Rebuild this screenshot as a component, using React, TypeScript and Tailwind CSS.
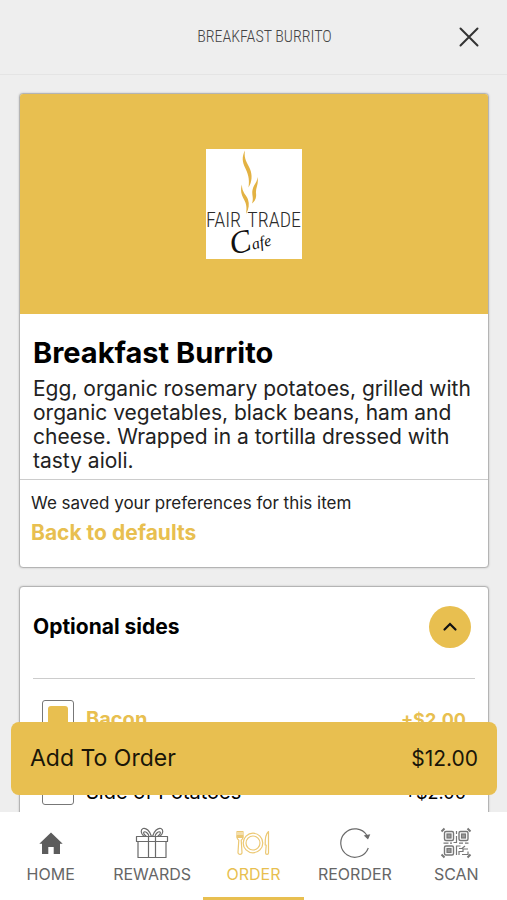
import { useState, type ReactNode } from "react";

function Logo() {
  return (
    <svg viewBox="0 0 96 110" className="h-[110px] w-24 bg-white" role="img" aria-label="Fair Trade Cafe">
      <g fill="#e3b243">
        <path d="M39 1.500C35.500 8 36.500 13 39 18.500C41.500 24 44 29 42.500 38.500C46 33 46.500 26 44 20C41.500 14 37.500 10 39 1.500z" />
        <path d="M51.500 28C51.500 33 47.500 36 46.500 41C45.500 46 48 49 46 54.500C50 51 50.500 48 50 44C49.500 39 53 35 51.500 28z" />
        <path d="M36 35.500C34 41 35.500 46 38 50.500C40.500 55 41 59 40 65C43 60 43.500 55 42 50.500C40.500 46 35.500 43 36 35.500z" />
      </g>
      <g fill="#2b2b2b" fontFamily="'Roboto Condensed', Lato, sans-serif" fontSize="20" fontWeight="300">
        <text x="0" y="78">FAIR</text>
        <text x="95" y="78" textAnchor="end">TRADE</text>
      </g>
      <g transform="rotate(-14 30 104)" fill="#111" fontFamily="'Liberation Serif', serif" fontStyle="italic">
        <text x="26" y="105" fontSize="32">
          C<tspan fontSize="16">afe</tspan>
        </text>
      </g>
    </svg>
  );
}

function CloseIcon() {
  return (
    <svg viewBox="0 0 20 20" className="size-5" fill="none" stroke="#333" strokeWidth="2" strokeLinecap="round">
      <path d="M1.500 1.500l17 17M18.500 1.500l-17 17" />
    </svg>
  );
}

function HomeIcon() {
  return (
    <svg viewBox="0 0 32 32" className="size-8" fill="#5c5c5c">
      <path d="M16 5.500 4.300 16.800H7V27h6.300v-7h5.400v7H25V16.800h2.700z" />
    </svg>
  );
}

function GiftIcon() {
  return (
    <svg viewBox="0 0 34 32" className="h-8 w-[34px]" fill="none" stroke="#6a6a6a" strokeWidth="1.200" strokeLinejoin="round">
      <path d="M1.500 9.500h31v5h-31zM3 14.500h28v16H3zM13.500 9.500v21M20.500 9.500v21" />
      <path d="M16.500 9.500C15 4 11 .5 8 1.500C5.500 2.500 5.500 6.500 9 9.500M14 9.500C13.500 6.500 10.500 4 9 5c-1.200 1 .5 3 2.500 4.500" />
      <path d="M17.500 9.500C19 4 23 .5 26 1.500C28.500 2.500 28.500 6.500 25 9.500M20 9.500C20.500 6.500 23.500 4 25 5c1.200 1-.5 3-2.500 4.500" />
    </svg>
  );
}

function PlateIcon() {
  return (
    <svg viewBox="0 0 34 32" className="h-8 w-[34px]" fill="none" stroke="#ecc873" strokeWidth="1.200" strokeLinejoin="round">
      <circle cx="17" cy="16" r="9.800" />
      <circle cx="17" cy="16" r="7" />
      <path d="M1 4.500h6V10c0 2-1 2.800-1.800 3.300L6 25.500c0 2.400-4 2.400-4 0l.8-12.200C2 12.800 1 12 1 10zM3 4.500V9M5 4.500V9" />
      <path d="M1.200 8.500h5.600v2H1.200z" fill="#ecc873" />
      <path d="M32.500 4.500c-3 2.500-3.500 8-3.300 13.500h1L29.600 26c0 1.800 2.900 1.800 2.900 0z" />
    </svg>
  );
}

function ReorderIcon() {
  return (
    <svg viewBox="0 0 32 32" className="size-8" fill="none" stroke="#6a6a6a" strokeWidth="1.200">
      <path d="M29.300 21A14.200 14.200 0 1 1 28 8.500" />
      <path d="M26 8.800l4.300-.8-1.500 3.500z" fill="#6a6a6a" />
    </svg>
  );
}

function ScanIcon() {
  return (
    <svg viewBox="0 0 32 32" className="size-8" fill="none" stroke="#777" strokeWidth="1.200">
      <path d="M1.500 4.500l3-3M27.500 1.500l3 3M30.500 27.500l-3 3M4.500 30.500l-3-3" strokeWidth="2" />
      <g strokeWidth="1.400">
        <rect x="4.500" y="4.500" width="9" height="9" rx="1.500" />
        <rect x="19" y="4.500" width="9" height="9" rx="1.500" />
        <rect x="4.500" y="19" width="9" height="9" rx="1.500" />
      </g>
      <g fill="#999">
        <rect x="7" y="7" width="4" height="4" />
        <rect x="21.500" y="7" width="4" height="4" />
        <rect x="7" y="21.500" width="4" height="4" />
      </g>
      <path d="M16.500 4v3M16.500 9v6.500h-3M3.500 16.200h5M10 16.200h2M19 16.200h4M25 16.200h3.500M16.500 28v-9h4M19 21.500h3l3-2.500M19 28v-3.500h4v-2.500h5M22 27.500h6v-3" />
    </svg>
  );
}

type Side = { id: string; name: string; price: string; saved: boolean };

const sides: Side[] = [
  { id: "bacon", name: "Bacon", price: "+$2.00", saved: true },
  { id: "potatoes", name: "Side of Potatoes", price: "+$2.00", saved: false },
];

function SideRow({ side }: { side: Side }) {
  const [checked, setChecked] = useState(side.saved);
  return (
    <label
      htmlFor={side.id}
      className={`flex h-8 items-center gap-3 ${checked ? "font-bold text-[#e8bf50]" : "text-black"}`}
    >
      <span className="grid size-8 shrink-0 place-items-center">
        <input
          id={side.id}
          type="checkbox"
          checked={checked}
          onChange={(e) => setChecked(e.target.checked)}
          className="peer col-start-1 row-start-1 size-8 appearance-none rounded-[3px] border border-[#777] bg-white"
        />
        <span className="pointer-events-none col-start-1 row-start-1 hidden size-5 rounded-[3px] bg-[#e8bf50] peer-checked:block" />
      </span>
      <span className="flex grow items-baseline justify-between pt-1.5">
        <span className="text-xl">{side.name}</span>
        <span className="text-lg">{side.price}</span>
      </span>
    </label>
  );
}

const tabs: { name: string; icon: ReactNode; active?: boolean }[] = [
  { name: "HOME", icon: <HomeIcon /> },
  { name: "REWARDS", icon: <GiftIcon /> },
  { name: "ORDER", icon: <PlateIcon />, active: true },
  { name: "REORDER", icon: <ReorderIcon /> },
  { name: "SCAN", icon: <ScanIcon /> },
];

const card = "shrink-0 overflow-hidden rounded-[4px] border border-[#b4b4b4] bg-white shadow-[0_0_2px_#bbb]";

export default function App() {
  const [open, setOpen] = useState(true);
  return (
    <div className="flex h-screen flex-col bg-[#eeeeee] font-['Inter',sans-serif] text-black">
      <header className="grid shrink-0 grid-cols-[1fr_auto_1fr] items-center border-b border-[#e4e4e4] py-[27px] pr-7 pl-5">
        <h1 className="col-start-2 pl-[30px] font-['Roboto_Condensed','Lato',sans-serif] text-base leading-5 font-light text-[#444]">
          BREAKFAST BURRITO
        </h1>
        <button type="button" aria-label="Close" className="justify-self-end">
          <CloseIcon />
        </button>
      </header>

      <div className="relative min-h-0 grow">
        <main className="flex h-full flex-col gap-[18px] overflow-y-auto pt-[18px] pr-[18px] pb-28 pl-[19px] [scrollbar-width:none]">
          <article className={card}>
            <div className="grid h-[220px] place-items-center bg-[#e8bf50]">
              <Logo />
            </div>
            <div className="px-[13px] pt-[23px] pb-1.5">
              <h2 className="text-[29px] leading-8 font-bold">Breakfast Burrito</h2>
              <p className="pt-2 text-[21px] leading-6 text-[#222]">
                Egg, organic rosemary potatoes, grilled with organic vegetables, black beans, ham and cheese. Wrapped in
                a tortilla dressed with tasty aioli.
              </p>
            </div>
            <div className="border-t border-[#ccc] px-[11px] pt-[11px] pb-5">
              <p className="text-[17px] leading-6 text-[#222]">We saved your preferences for this item</p>
              <button type="button" className="mt-1 block text-[21px] leading-7 font-bold text-[#e8bf50]">
                Back to defaults
              </button>
            </div>
          </article>

          <section className={`${card} px-[13px]`}>
            <div className="flex items-center justify-between border-b border-[#ccc] pt-[19px] pr-1 pb-[30px]">
              <h2 className="text-[21px] leading-6 font-bold">Optional sides</h2>
              <button
                type="button"
                aria-label="Toggle optional sides"
                aria-expanded={open}
                onClick={() => setOpen(!open)}
                className="grid size-[42px] place-items-center rounded-full bg-[#e8bf50]"
              >
                <svg viewBox="0 0 16 10" className="h-[10px] w-4" fill="none" stroke="#111" strokeWidth="2.200" strokeLinecap="round">
                  <path d="M2.500 7.500l5.500-5.500 5.500 5.500" />
                </svg>
              </button>
            </div>
            {open && (
              <div className="flex flex-col gap-[41px] py-[21px] pr-[9px] pl-[9px]">
                {sides.map((side) => (
                  <SideRow key={side.id} side={side} />
                ))}
              </div>
            )}
          </section>
        </main>

        <button
          type="button"
          className="absolute right-[10px] bottom-[17px] left-[11px] flex h-[73px] items-center justify-between rounded-lg bg-[#e8bf50] px-[19px] text-[#1a1608]"
        >
          <span className="text-[23px]">Add To Order</span>
          <span className="text-[21px]">$12.00</span>
        </button>
      </div>

      <nav className="grid h-[88px] shrink-0 grid-cols-5 bg-white">
        {tabs.map((tab) => (
          <a
            key={tab.name}
            href={`#${tab.name.toLowerCase()}`}
            aria-current={tab.active ? "page" : undefined}
            className={`flex flex-col items-center gap-[5px] border-b-[3px] pt-[15px] text-base leading-5 ${
              tab.active ? "border-[#e8bf50] text-[#e8bf50]" : "border-transparent text-[#666]"
            }`}
          >
            {tab.icon}
            {tab.name}
          </a>
        ))}
      </nav>
    </div>
  );
}
